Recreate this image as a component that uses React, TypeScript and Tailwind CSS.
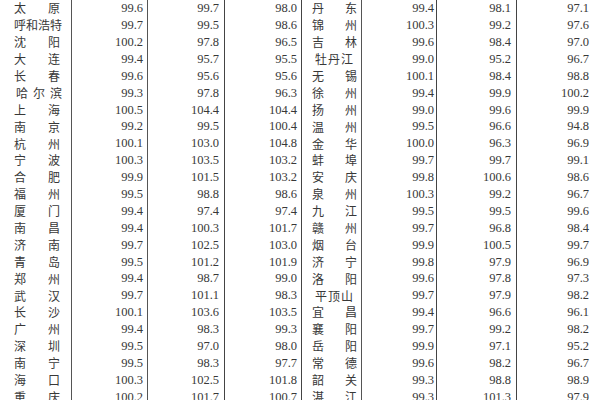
import React from 'react';

type Row = [string, string, string, string];

const left: Row[] = [
  ['太原', '99.6', '99.7', '98.0'],
  ['呼和浩特', '99.7', '99.5', '98.6'],
  ['沈阳', '100.2', '97.8', '96.5'],
  ['大连', '99.4', '95.7', '95.5'],
  ['长春', '99.6', '95.6', '95.6'],
  ['哈尔滨', '99.3', '97.8', '96.3'],
  ['上海', '100.5', '104.4', '104.4'],
  ['南京', '99.2', '99.5', '100.4'],
  ['杭州', '100.1', '103.0', '104.8'],
  ['宁波', '100.3', '103.5', '103.2'],
  ['合肥', '99.9', '101.5', '103.2'],
  ['福州', '99.5', '98.8', '98.6'],
  ['厦门', '99.4', '97.4', '97.4'],
  ['南昌', '99.4', '100.3', '101.7'],
  ['济南', '99.7', '102.5', '103.0'],
  ['青岛', '99.5', '101.2', '101.9'],
  ['郑州', '99.4', '98.7', '99.0'],
  ['武汉', '99.7', '101.1', '98.3'],
  ['长沙', '100.1', '103.6', '103.5'],
  ['广州', '99.4', '98.3', '99.3'],
  ['深圳', '99.5', '97.0', '98.0'],
  ['南宁', '99.5', '98.3', '97.7'],
  ['海口', '100.3', '102.5', '101.8'],
  ['重庆', '100.2', '101.7', '100.7'],
];

const right: Row[] = [
  ['丹东', '99.4', '98.1', '97.1'],
  ['锦州', '100.3', '99.2', '97.6'],
  ['吉林', '99.6', '98.4', '97.0'],
  ['牡丹江', '99.0', '95.2', '96.7'],
  ['无锡', '100.1', '98.4', '98.8'],
  ['徐州', '99.4', '99.9', '100.2'],
  ['扬州', '99.0', '99.6', '99.9'],
  ['温州', '99.5', '96.6', '94.8'],
  ['金华', '100.0', '96.3', '96.9'],
  ['蚌埠', '99.7', '99.7', '99.1'],
  ['安庆', '99.8', '100.6', '98.6'],
  ['泉州', '100.3', '99.2', '96.7'],
  ['九江', '99.5', '99.5', '99.6'],
  ['赣州', '99.7', '96.8', '98.4'],
  ['烟台', '99.9', '100.5', '99.7'],
  ['济宁', '99.8', '97.9', '96.9'],
  ['洛阳', '99.6', '97.8', '97.3'],
  ['平顶山', '99.7', '97.9', '98.2'],
  ['宜昌', '99.4', '96.6', '96.1'],
  ['襄阳', '99.7', '99.2', '98.2'],
  ['岳阳', '99.9', '97.1', '95.2'],
  ['常德', '99.6', '98.2', '96.7'],
  ['韶关', '99.3', '98.8', '98.9'],
  ['湛江', '99.3', '101.3', '97.9'],
];

// city name: characters spread across the cell, 3-char names sit a bit further in
const Name = ({ text, side }: { text: string; side: 'l' | 'r' }) => {
  const three = text.length === 3;
  const pad =
    side === 'l'
      ? three
        ? 'pl-[16px] pr-[9px]'
        : 'pl-[14px] pr-[11px]'
      : three
        ? 'pl-[13px] pr-[8px]'
        : 'pl-[10px] pr-[4px]';
  return (
    <div
      className={`flex items-center justify-between border-r border-[#555] font-['Noto_Sans_CJK_SC',sans-serif] text-[12px] text-[#383838] ${pad}`}
    >
      {text.split('').map((c, i) => (
        <span key={i}>{c}</span>
      ))}
    </div>
  );
};

const Num = ({ v, className }: { v: string; className: string }) => (
  <div className={`flex items-center justify-end font-['Liberation_Serif',serif] text-[12.5px] text-[#383838] ${className}`}>
    {v}
  </div>
);

export default function App() {
  return (
    <div className="w-[600px] h-[400px] overflow-hidden bg-white">
      {left.map((l, i) => {
        const r = right[i];
        return (
          <div key={i} className="grid h-[16.9px] grid-cols-[72px_76px_77px_77px_60px_75px_80px_83px] leading-none">
            <Name text={l[0]} side="l" />
            <Num v={l[1]} className="border-r border-[#555] pr-[4px]" />
            <Num v={l[2]} className="border-r border-[#444] pr-[5px]" />
            <Num v={l[3]} className="border-r border-[#444] pr-[4px]" />
            <Name text={r[0]} side="r" />
            <Num v={r[1]} className="border-r border-[#444] pr-[2px]" />
            <Num v={r[2]} className="border-r border-[#444] pr-[5px]" />
            <Num v={r[3]} className="pr-[11px]" />
          </div>
        );
      })}
    </div>
  );
}
